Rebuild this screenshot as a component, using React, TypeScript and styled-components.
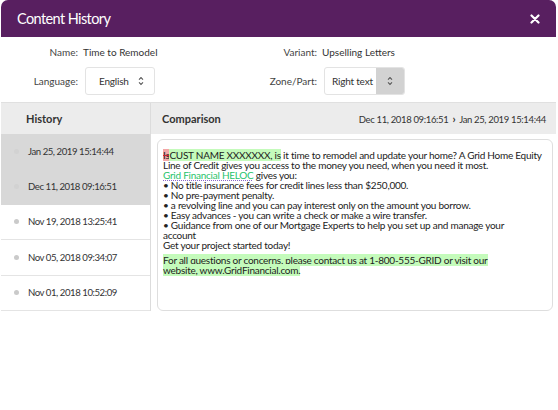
import styled, { createGlobalStyle } from "styled-components";

const GlobalStyle = createGlobalStyle`
  html, body {
    margin: 0;
    padding: 0;
    background: #ffffff;
  }
  body {
    font-family: Lato, "Open Sans", "DejaVu Sans", sans-serif;
    color: #333;
  }
`;

const historyItems = [
  { date: "Jan 25, 2019 15:14:44", selected: true },
  { date: "Dec 11, 2018 09:16:51", selected: true },
  { date: "Nov 19, 2018 13:25:41", selected: false },
  { date: "Nov 05, 2018 09:34:07", selected: false },
  { date: "Nov 01, 2018 10:52:09", selected: false },
];

export default function App() {
  return (
    <>
      <GlobalStyle />
      <SModal>
        <SHeader>
          <STitle children="Content History" />
          <SClose aria-label="Close">
            <svg width="10" height="10" viewBox="0 0 10 10">
              <path d="M1.5 1.5 L8.5 8.5 M8.5 1.5 L1.5 8.5" stroke="#fff" strokeWidth="2.2" strokeLinecap="round" />
            </svg>
          </SClose>
        </SHeader>

        <SForm>
          <SLabel children="Name:" />
          <SValue children="Time to Remodel" />
          <SLabel children="Variant:" />
          <SValue children="Upselling Letters" />

          <SLabel children="Language:" />
          <SSelectCell>
            <SSelect $width={70}>
              <SSelectText $pad={13} children="English" />
              <SSelectArrow $shaded={false}>
                <Chevrons />
              </SSelectArrow>
            </SSelect>
          </SSelectCell>
          <SLabel children="Zone/Part:" />
          <SSelectCell>
            <SSelect $width={81}>
              <SSelectText $pad={7} children="Right text" />
              <SSelectArrow $shaded>
                <Chevrons />
              </SSelectArrow>
            </SSelect>
          </SSelectCell>
        </SForm>

        <STable>
          <SHeadCell $left>
            <SHeadTitle children="History" />
          </SHeadCell>
          <SHeadCell>
            <SHeadTitle children="Comparison" />
            <SRange>
              Dec 11, 2018 09:16:51 <SRangeArrow children="›" /> Jan 25, 2019 15:14:44
            </SRange>
          </SHeadCell>

          <SHistoryList>
            {historyItems.map((item) => (
              <SHistoryRow key={item.date} $selected={item.selected}>
                <SDot $selected={item.selected} />
                <span children={item.date} />
              </SHistoryRow>
            ))}
          </SHistoryList>

          <SComparePane>
            <SCompareBox>
              <p>
                <SDeleted children="Is" />
                <SInserted children="CUST NAME XXXXXXX, is" /> it time to remodel and update your home? A Grid Home
                Equity
                <br />
                Line of Credit gives you access to the money you need, when you need it most.
                <br />
                <SLink children="Grid Financial HELOC" /> gives you:
                <br />• No title insurance fees for credit lines less than $250,000.
                <br />• No pre-payment penalty.
                <br />• a revolving line and you can pay interest only on the amount you borrow.
                <br />• Easy advances - you can write a check or make a wire transfer.
                <br />• Guidance from one of our Mortgage Experts to help you set up and manage your
                <br />
                account
                <br />
                Get your project started today!
              </p>
              <p>
                <SInserted>
                  For all questions or concerns, please contact us at 1-800-555-GRID or visit our
                  <br />
                  website, www.GridFinancial.com.
                </SInserted>
              </p>
            </SCompareBox>
          </SComparePane>
        </STable>
      </SModal>
    </>
  );
}

function Chevrons() {
  return (
    <svg width="6" height="10" viewBox="0 0 6 10">
      <path d="M1 3.6 L3 1.6 L5 3.6 M1 6.4 L3 8.4 L5 6.4" fill="none" stroke="#555" strokeWidth="1.1" />
    </svg>
  );
}

// #region Styles

const SModal = styled.div`
  width: 555px;
  margin-left: 1px;
  background: #fff;
`;

const SHeader = styled.header`
  display: flex;
  align-items: center;
  justify-content: space-between;
  height: 37px;
  padding: 0 16px 0 16px;
  background: #581f60;
  border-radius: 7px 7px 0 0;
`;

const STitle = styled.h1`
  margin: 0;
  font-size: 14.5px;
  font-weight: 400;
  color: #fff;
  letter-spacing: -0.6px;
`;

const SClose = styled.button.attrs({ type: "button" })`
  display: flex;
  padding: 0;
  margin-top: 1px;
  background: none;
  border: none;
  cursor: pointer;
`;

const SForm = styled.div`
  display: grid;
  grid-template-columns: 77px 162px 77px 1fr;
  grid-template-rows: 12px 28px;
  row-gap: 9px;
  align-items: center;
  padding: 9px 0 7px;
  font-size: 10px;
`;

const SLabel = styled.div`
  text-align: right;
  color: #444;
  line-height: 12px;
`;

const SValue = styled.div`
  padding-left: 5px;
  color: #333;
  line-height: 12px;
`;

const SSelectCell = styled.div`
  padding-left: 7px;
`;

const SSelect = styled.div<{ $width: number }>`
  display: flex;
  width: ${(p) => p.$width}px;
  height: 28px;
  box-sizing: border-box;
  border: 1px solid #e3e3e3;
  border-radius: 3px;
  overflow: hidden;
  background: #fff;
`;

const SSelectText = styled.span<{ $pad: number }>`
  flex: 1;
  display: flex;
  align-items: center;
  padding-left: ${(p) => p.$pad}px;
  color: #333;
  letter-spacing: -0.2px;
`;

const SSelectArrow = styled.span<{ $shaded: boolean }>`
  display: flex;
  align-items: center;
  justify-content: center;
  width: 28px;
  background: ${(p) => (p.$shaded ? "#d2d2d2" : "transparent")};
`;

const STable = styled.div`
  display: grid;
  grid-template-columns: 150px 1fr;
  border-top: 1px solid #e0e0e0;
`;

const SHeadCell = styled.div<{ $left?: boolean }>`
  display: flex;
  align-items: center;
  justify-content: space-between;
  height: 31px;
  padding: 0 10px 0 ${(p) => (p.$left ? 25 : 11)}px;
  background: #ececec;
  border-right: ${(p) => (p.$left ? "1px solid #dcdcdc" : "none")};
`;

const SHeadTitle = styled.span`
  font-size: 11px;
  font-weight: 700;
  color: #333;
`;

const SRange = styled.span`
  font-size: 9.5px;
  letter-spacing: -0.35px;
  color: #333;
`;

const SRangeArrow = styled.b`
  margin: 0 2px;
  font-size: 11px;
`;

const SHistoryList = styled.div`
  border-right: 1px solid #dcdcdc;
`;

const SHistoryRow = styled.div<{ $selected: boolean }>`
  display: flex;
  align-items: center;
  gap: 9px;
  height: 35.4px;
  box-sizing: border-box;
  padding-left: 13px;
  font-size: 9.6px;
  letter-spacing: -0.45px;
  color: #333;
  background: ${(p) => (p.$selected ? "#d8d8d8" : "#fff")};
  border-bottom: 1px solid ${(p) => (p.$selected ? "#d8d8d8" : "#e4e4e4")};
`;

const SDot = styled.span<{ $selected: boolean }>`
  width: 5px;
  height: 5px;
  border-radius: 50%;
  background: ${(p) => (p.$selected ? "#d2d2d2" : "#cacaca")};
`;

const SComparePane = styled.div`
  display: flex;
  padding: 5px 3px 0 6px;
`;

const SCompareBox = styled.div`
  flex: 1;
  box-sizing: border-box;
  padding: 10px 4px 10px 5px;
  border: 1px solid #dedede;
  border-radius: 6px;
  font-size: 10px;
  line-height: 10px;
  letter-spacing: -0.25px;
  color: #222;

  p {
    margin: 0 0 5px;
  }
`;

const SDeleted = styled.span`
  background: #f3a6a6;
  text-decoration: line-through;
  text-decoration-color: #c23;
`;

const SInserted = styled.span`
  background: #c4fbbb;
`;

const SLink = styled.span`
  color: #27c36a;
  text-decoration: underline dotted #8a68c8;
`;

// #endregion
